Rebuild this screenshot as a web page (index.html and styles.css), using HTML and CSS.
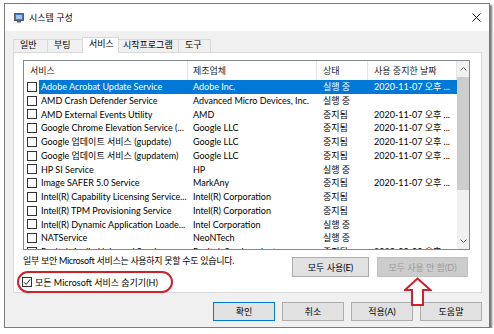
FILE: index.html
```html
<!DOCTYPE html>
<html lang="ko">
<head>
<meta charset="utf-8">
<title>시스템 구성</title>
<link rel="stylesheet" href="styles.css">
</head>
<body>
<div class="win">
  <div class="titlebar">
    <svg class="appicon" viewBox="0 0 10 10" width="10" height="10">
      <rect x="0.5" y="0.5" width="9" height="7" fill="#3a78c8" stroke="#56606e"/>
      <rect x="2" y="2" width="6" height="4" fill="#9cc7f2"/>
      <rect x="3" y="8" width="4" height="1.5" fill="#56606e"/>
    </svg>
    <span class="title">시스템 구성</span>
    <svg class="close" viewBox="0 0 9 9" width="9" height="9">
      <path d="M0.5 0.5 L8.5 8.5 M8.5 0.5 L0.5 8.5" stroke="#111" stroke-width="1" fill="none"/>
    </svg>
  </div>
  <div class="body">
    <div class="tabs">
      <div class="tab t1">일반</div>
      <div class="tab t2">부팅</div>
      <div class="tab t3 sel">서비스</div>
      <div class="tab t4">시작프로그램</div>
      <div class="tab t5">도구</div>
    </div>
    <div class="panel">
      <div class="list">
        <div class="lmain">
          <div class="hdr">
            <span class="h">서비스</span>
            <span class="h">제조업체</span>
            <span class="h">상태</span>
            <span class="h">사용 중지한 날짜</span>
          </div>
          <div class="row sel">
            <div class="name"><i class="cb"></i><span class="nt">Adobe Acrobat Update Service</span></div>
            <div class="c">Adobe Inc.</div><div class="c">실행 중</div><div class="c">2020-11-07 오후 ...</div>
          </div>
          <div class="row">
            <div class="name"><i class="cb"></i><span class="nt">AMD Crash Defender Service</span></div>
            <div class="c">Advanced Micro Devices, Inc.</div><div class="c">실행 중</div><div class="c"></div>
          </div>
          <div class="row">
            <div class="name"><i class="cb"></i><span class="nt">AMD External Events Utility</span></div>
            <div class="c">AMD</div><div class="c">중지됨</div><div class="c">2020-11-07 오후 ...</div>
          </div>
          <div class="row">
            <div class="name"><i class="cb"></i><span class="nt">Google Chrome Elevation Service (...</span></div>
            <div class="c">Google LLC</div><div class="c">중지됨</div><div class="c">2020-11-07 오후 ...</div>
          </div>
          <div class="row">
            <div class="name"><i class="cb"></i><span class="nt">Google 업데이트 서비스 (gupdate)</span></div>
            <div class="c">Google LLC</div><div class="c">중지됨</div><div class="c">2020-11-07 오후 ...</div>
          </div>
          <div class="row">
            <div class="name"><i class="cb"></i><span class="nt">Google 업데이트 서비스 (gupdatem)</span></div>
            <div class="c">Google LLC</div><div class="c">중지됨</div><div class="c">2020-11-07 오후 ...</div>
          </div>
          <div class="row">
            <div class="name"><i class="cb"></i><span class="nt">HP SI Service</span></div>
            <div class="c">HP</div><div class="c">실행 중</div><div class="c"></div>
          </div>
          <div class="row">
            <div class="name"><i class="cb"></i><span class="nt">Image SAFER 5.0 Service</span></div>
            <div class="c">MarkAny</div><div class="c">중지됨</div><div class="c">2020-11-07 오후 ...</div>
          </div>
          <div class="row">
            <div class="name"><i class="cb"></i><span class="nt">Intel(R) Capability Licensing Service...</span></div>
            <div class="c">Intel(R) Corporation</div><div class="c">중지됨</div><div class="c"></div>
          </div>
          <div class="row">
            <div class="name"><i class="cb"></i><span class="nt">Intel(R) TPM Provisioning Service</span></div>
            <div class="c">Intel(R) Corporation</div><div class="c">중지됨</div><div class="c"></div>
          </div>
          <div class="row">
            <div class="name"><i class="cb"></i><span class="nt">Intel(R) Dynamic Application Loade...</span></div>
            <div class="c">Intel Corporation</div><div class="c">실행 중</div><div class="c"></div>
          </div>
          <div class="row">
            <div class="name"><i class="cb"></i><span class="nt">NATService</span></div>
            <div class="c">NeoNTech</div><div class="c">실행 중</div><div class="c"></div>
          </div>
          <div class="row">
            <div class="name"><i class="cb"></i><span class="nt">Realtek Audio Universal Service</span></div>
            <div class="c">Realtek Semiconductor</div><div class="c">중지됨</div><div class="c">2020-00-00 오후 ...</div>
          </div>
        </div>
        <div class="scroll">
          <div class="sbtn">
            <svg viewBox="0 0 7 4" width="7" height="4"><path d="M0.5 3.5 L3.5 0.5 L6.5 3.5" fill="none" stroke="#606060" stroke-width="1"/></svg>
          </div>
          <div class="thumb"></div>
          <div class="track"></div>
          <div class="sbtn">
            <svg viewBox="0 0 7 4" width="7" height="4"><path d="M0.5 0.5 L3.5 3.5 L6.5 0.5" fill="none" stroke="#606060" stroke-width="1"/></svg>
          </div>
        </div>
      </div>
      <div class="below">
        <div class="bl">
          <div class="note">일부 보안 Microsoft 서비스는 사용하지 못할 수도 있습니다.</div>
          <div class="hide">
            <span class="cb checked">
              <svg viewBox="0 0 8 8" width="8" height="8"><path d="M1 4.2 L3.2 6.4 L7.2 1.4" fill="none" stroke="#222" stroke-width="1"/></svg>
            </span>
            <span>모든 Microsoft 서비스 숨기기(H)</span>
          </div>
        </div>
        <div class="br">
          <div class="btn w77">모두 사용(E)</div>
          <div class="btn w91 dis">모두 사용 안 함(D)</div>
        </div>
      </div>
    </div>
    <div class="footer">
      <div class="btn fb def">확인</div>
      <div class="btn fb">취소</div>
      <div class="btn fb">적용(A)</div>
      <div class="btn fb">도움말</div>
    </div>
  </div>
  <svg class="arrow" viewBox="0 0 28 30" width="28" height="30">
    <path d="M13.5 1.5 L26.5 13 L19 13 L19 28 L8 28 L8 13 L1 13 Z" fill="#fff" stroke="#d0202a" stroke-width="2" stroke-linejoin="miter"/>
  </svg>
</div>
</body>
</html>
```

FILE: styles.css
```css
* { box-sizing: border-box; }
body {
  margin: 0;
  background: #fff;
  font-family: Lato, "Noto Sans CJK KR", sans-serif;
  font-size: 9px;
  color: #000;
}
.win {
  margin: 3px 0 0 4px;
  width: 486px;
  height: 325px;
  border: 1px solid #7a7a7a;
  box-shadow: 2px 2px 2px rgba(0,0,0,0.55);
  background: #f0f0f0;
  display: flex;
  flex-direction: column;
  position: relative;
}
.titlebar {
  height: 27px;
  flex: none;
  background: #fff;
  display: flex;
  align-items: center;
  padding-left: 9px;
}
.appicon { margin-right: 5px; }
.title { font-size: 9px; }
.close { margin-left: auto; margin-right: 8px; }
.body {
  flex: 1;
  display: flex;
  flex-direction: column;
  padding: 6px 7px 0 8px;
}
.tabs {
  height: 15px;
  display: flex;
  align-items: flex-end;
  position: relative;
  z-index: 1;
}
.tab {
  height: 13px;
  border: 1px solid #d9d9d9;
  border-bottom: none;
  background: #f0f0f0;
  line-height: 7px;
  padding-top: 1px;
  padding-left: 6px;
  margin-right: -1px;
}
.t1 { width: 35px; }
.t2 { width: 36px; }
.t3 { width: 37px; }
.t4 { width: 61px; padding-left: 4px; }
.t5 { width: 33px; }
.tab.sel {
  height: 16px;
  margin-bottom: -1px;
  background: #fff;
  line-height: 9px;
  border-color: #d9d9d9;
}
.panel {
  height: 241px;
  flex: none;
  background: #fff;
  border: 1px solid #d9d9d9;
  padding-top: 7px;
  display: flex;
  flex-direction: column;
}
.list {
  height: 190px;
  flex: none;
  margin: 0 11px 0 9px;
  border: 1px solid #828790;
  display: flex;
}
.lmain {
  width: 433px;
  overflow: hidden;
}
.hdr, .row {
  display: grid;
  grid-template-columns: 164px 129px 51px 89px;
}
.hdr { height: 19px; }
.h {
  display: flex;
  align-items: center;
  padding-left: 6px;
  border-right: 1px solid #e5e5e5;
  color: #222;
}
.hdr .h:nth-child(2) { padding-left: 5px; }
.row {
  height: 13.75px;
  line-height: 13.75px;
  white-space: nowrap;
}
.c {
  overflow: hidden;
  padding-left: 5px;
}
.row .c:nth-child(3) { padding-left: 6px; }
.row .c:nth-child(4) { padding-left: 6px; }
.name {
  display: flex;
  align-items: center;
  padding-left: 3px;
  overflow: hidden;
}
.cb {
  width: 10px;
  height: 10px;
  border: 1px solid #333;
  background: #fff;
  flex: none;
  margin-right: 2px;
  display: flex;
  align-items: center;
  justify-content: center;
}
.nt {
  flex: 1;
  padding-left: 2px;
  overflow: hidden;
}
.row.sel .nt, .row.sel .c {
  background: #0078d7;
  color: #fff;
}
.scroll {
  width: 12px;
  background: #f0f0f0;
  display: flex;
  flex-direction: column;
}
.sbtn {
  height: 16px;
  flex: none;
  display: flex;
  align-items: center;
  justify-content: center;
}
.thumb {
  height: 113px;
  flex: none;
  background: #cdcdcd;
}
.track { flex: 1; }
.below {
  flex: 1;
  display: flex;
}
.bl {
  flex: 1;
  display: flex;
  flex-direction: column;
  align-items: flex-start;
  padding-left: 3px;
}
.note {
  margin: 4px 0 0 6px;
  line-height: 14px;
  white-space: nowrap;
  letter-spacing: -0.3px;
}
.hide {
  margin-top: 3px;
  height: 22px;
  border: 2px solid #d0202a;
  border-radius: 11px;
  display: flex;
  align-items: center;
  padding: 0 13px 0 3px;
  white-space: nowrap;
}
.cb.checked { margin-right: 3px; }
.br {
  display: flex;
  flex: none;
  gap: 8px;
  margin-top: 7px;
  margin-right: 13px;
  align-self: flex-start;
}
.btn {
  height: 20px;
  flex: none;
  border: 1px solid #adadad;
  background: #e1e1e1;
  display: flex;
  align-items: center;
  justify-content: center;
  white-space: nowrap;
}
.w77 { width: 77px; }
.w91 { width: 91px; }
.btn.dis {
  background: #cccccc;
  border-color: #bfbfbf;
  color: #9a9a9a;
}
.footer {
  display: flex;
  justify-content: flex-end;
  gap: 7px;
  margin-top: 9px;
}
.fb { width: 62px; height: 19px; }
.btn.def { border-color: #0078d7; }
.arrow {
  position: absolute;
  left: 399px;
  top: 273px;
}
```
